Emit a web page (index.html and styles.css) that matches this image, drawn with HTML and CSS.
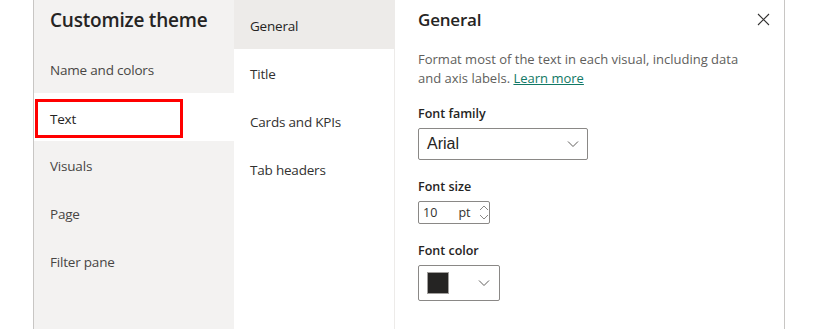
FILE: index.html
```html
<html>

<head>
    <link rel="stylesheet" href="styles.css">
</head>

<body>
    <div class="dialog">
        <div class="nav">
            <h1 class="nav-title">Customize theme</h1>
            <div class="nav-item">Name and colors</div>
            <div class="nav-item active"><span class="highlight">Text</span></div>
            <div class="nav-item">Visuals</div>
            <div class="nav-item">Page</div>
            <div class="nav-item">Filter pane</div>
        </div>
        <div class="subnav">
            <div class="subnav-item active">General</div>
            <div class="subnav-item">Title</div>
            <div class="subnav-item">Cards and KPIs</div>
            <div class="subnav-item">Tab headers</div>
        </div>
        <div class="content">
            <div class="content-head">
                <h2 class="content-title">General</h2>
                <button class="close" title="close">
                    <svg width="13" height="13" viewBox="0 0 13 13"><path d="M1 1 L12 12 M12 1 L1 12" stroke="#323130" stroke-width="1.1" fill="none"/></svg>
                </button>
            </div>
            <p class="desc">Format most of the text in each visual, including data<br>and axis labels. <a href="#">Learn more</a></p>

            <label class="field-label">Font family</label>
            <div class="dropdown">
                <span class="dropdown-value">Arial</span>
                <svg width="12" height="8" viewBox="0 0 12 8"><path d="M1 1.5 L6 6.5 L11 1.5" stroke="#605e5c" stroke-width="1" fill="none"/></svg>
            </div>

            <label class="field-label">Font size</label>
            <div class="spinner">
                <span class="spin-num">10</span>
                <span class="spin-unit">pt</span>
                <span class="spin-arrows">
                    <svg width="10" height="6" viewBox="0 0 10 6"><path d="M1 5 L5 1 L9 5" stroke="#8a8886" stroke-width="1" fill="none"/></svg>
                    <svg width="10" height="6" viewBox="0 0 10 6"><path d="M1 1 L5 5 L9 1" stroke="#8a8886" stroke-width="1" fill="none"/></svg>
                </span>
            </div>

            <label class="field-label">Font color</label>
            <div class="color-pick">
                <span class="swatch"></span>
                <svg width="12" height="8" viewBox="0 0 12 8"><path d="M1 1.5 L6 6.5 L11 1.5" stroke="#605e5c" stroke-width="1" fill="none"/></svg>
            </div>
        </div>
    </div>
</body>

</html>
```

FILE: styles.css
```css
body {
    margin: 0;
    font-family: "Open Sans", "Noto Sans", sans-serif;
    color: #323130;
    background: #fff;
}

.dialog {
    display: flex;
    height: 329px;
    margin-left: 33px;
    width: 752px;
    border-left: 1px solid #c8c6c4;
    border-right: 1px solid #c8c6c4;
    box-sizing: border-box;
}

.nav {
    width: 200px;
    background: #f3f2f1;
    display: flex;
    flex-direction: column;
}

.nav-title {
    margin: 0;
    height: 45px;
    padding: 7px 0 0 16px;
    box-sizing: border-box;
    font-size: 19px;
    font-weight: 600;
    color: #252423;
    letter-spacing: -0.2px;
}

.nav-item {
    height: 48px;
    display: flex;
    align-items: center;
    padding-left: 16px;
    padding-top: 1px;
    box-sizing: border-box;
    font-size: 13.5px;
    color: #484644;
    letter-spacing: -0.2px;
}

.nav-item.active {
    background: #fff;
    padding-left: 1px;
    padding-top: 0;
    color: #252423;
}

.highlight {
    width: 148px;
    height: 39px;
    border: 3px solid #ff0000;
    box-sizing: border-box;
    display: flex;
    align-items: center;
    padding-left: 12px;
    margin-top: 3px;
}

.subnav {
    width: 160px;
    background: #fff;
    border-right: 1px solid #edebe9;
}

.subnav-item {
    height: 48px;
    display: flex;
    align-items: center;
    padding-left: 16px;
    padding-top: 2px;
    box-sizing: border-box;
    font-size: 13.5px;
    color: #323130;
    letter-spacing: -0.2px;
}

.subnav-item.active {
    background: #edebe9;
    height: 49px;
    padding-top: 3px;
    color: #252423;
    font-weight: 500;
}

.content {
    flex-grow: 1;
    padding: 0 0 0 23px;
    display: flex;
    flex-direction: column;
    align-items: flex-start;
}

.content-head {
    display: flex;
    justify-content: space-between;
    align-items: center;
    width: 352px;
    height: 38px;
}

.content-title {
    margin: 0;
    font-size: 17px;
    font-weight: 600;
    color: #252423;
    letter-spacing: -0.2px;
}

.close {
    background: none;
    border: none;
    padding: 0;
    display: flex;
}

.desc {
    margin: 12px 0 0;
    width: 340px;
    font-size: 13px;
    line-height: 19px;
    color: #605e5c;
}

.desc a {
    color: #117865;
}

.field-label {
    display: block;
    margin-top: 17px;
    font-size: 12.5px;
    font-weight: 600;
    color: #252423;
    line-height: 18px;
}

.dropdown {
    margin-top: 5px;
    width: 170px;
    height: 32px;
    border: 1px solid #8a8886;
    border-radius: 2px;
    box-sizing: border-box;
    display: flex;
    align-items: center;
    justify-content: space-between;
    padding: 0 8px 0 8px;
}

.dropdown + .field-label,
.spinner + .field-label {
    margin-top: 18px;
}

.dropdown-value {
    font-family: "Liberation Sans", Arial, sans-serif;
    font-size: 16px;
    color: #252423;
}

.spinner {
    margin-top: 5px;
    width: 72px;
    height: 23px;
    border: 1px solid #8a8886;
    border-radius: 2px;
    box-sizing: border-box;
    display: flex;
    align-items: center;
    padding-left: 4px;
    font-size: 12.5px;
    color: #323130;
}

.spin-num {
    width: 36px;
}

.spin-unit {
    width: 21px;
}

.spin-arrows {
    display: flex;
    flex-direction: column;
    gap: 3px;
}

.spin-arrows svg {
    display: block;
}

.color-pick {
    margin-top: 5px;
    width: 82px;
    height: 36px;
    border: 1px solid #8a8886;
    border-radius: 2px;
    box-sizing: border-box;
    display: flex;
    align-items: center;
    justify-content: space-between;
    padding: 0 9px 0 8px;
}

.swatch {
    width: 22px;
    height: 22px;
    background: #252423;
    border: 1px solid #a19f9d;
    box-sizing: border-box;
}
```
